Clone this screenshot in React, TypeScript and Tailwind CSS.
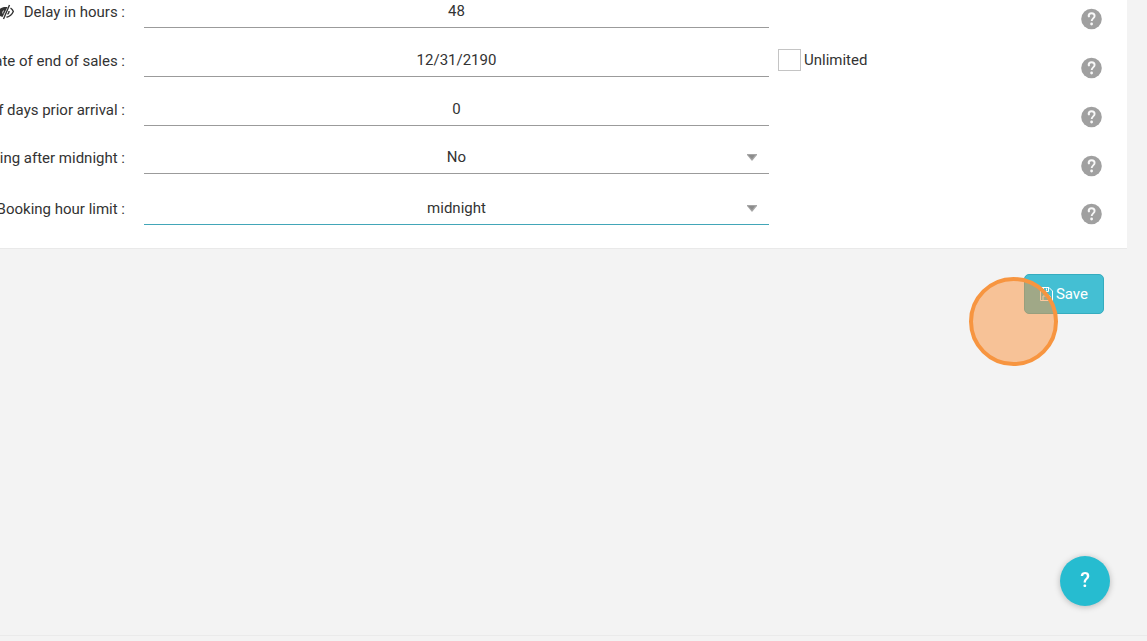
import { ReactNode } from 'react';

const fieldClass =
  'w-full h-8 appearance-none border-b border-[#9b9b9b] bg-transparent px-6 pb-0.5 text-center text-[#333] outline-none focus:border-[#42a6b8]';

function HelpButton({ label }: { label: string }) {
  return (
    <button type="button" aria-label={`Help: ${label}`} className="mt-[26px] ml-auto shrink-0 self-start">
      <svg width="21" height="22" viewBox="0 0 21 22" className="block">
        <circle cx="10.5" cy="11" r="10.3" fill="#a0a0a0" />
        <path d="M7.6 8.200C7.600 6.300 8.800 5.300 10.600 5.300c1.800 0 3 1 3 2.600 0 2.500-2.900 2.500-2.900 5.200" fill="none" stroke="#f8f8f8" strokeWidth="1.900" />
        <circle cx="7.900" cy="8.300" r="1.100" fill="#f8f8f8" />
        <circle cx="10.600" cy="16" r="1.400" fill="#f8f8f8" />
      </svg>
    </button>
  );
}

function HiddenIcon() {
  return (
    <svg width="18" height="16" viewBox="0 0 18 16" className="shrink-0">
      <path d="M1 8.500C3 4.500 6 3 9.500 3L11.500 3 6.500 13C4 12.500 2 11 1 8.500Z" fill="#333" />
      <path d="M8 6.500c-1.200.8-1.500 1.800-1.200 3" fill="none" stroke="#fff" strokeWidth="0.900" />
      <path d="M13.500 1 7.500 15M14.500 4c1.500 1 2.400 2.200 2.800 3.500-1.400 3.300-3.600 5-6.800 5.800M13 7c.2 1.500-.4 2.600-1.500 3.300" fill="none" stroke="#333" strokeWidth="1.400" />
    </svg>
  );
}

function SaveIcon() {
  return (
    <svg width="13" height="14" viewBox="0 0 13 14" fill="none" stroke="currentColor">
      <path d="M.5.5h8.500l3.500 3.500v9.500H.5zM3.500.5v4h5v-4M3 13.500v-4.500h7v4.500M6.500 1.500v2" />
    </svg>
  );
}

type RowProps = {
  id: string;
  label: string;
  icon?: ReactNode;
  extra?: ReactNode;
  height?: string;
  children: ReactNode;
};

function FormRow({ id, label, icon, extra, height = 'h-[49px]', children }: RowProps) {
  return (
    <div className={`grid grid-cols-[125px_minmax(0,635fr)_minmax(0,349fr)] gap-x-[9px] ${height}`}>
      <div className="flex h-full items-end justify-end overflow-hidden pb-[9px]">
        <div className="flex items-center gap-[10px] whitespace-nowrap">
          {icon}
          <label htmlFor={id}>{label} :</label>
        </div>
      </div>
      <div className="relative flex items-end pb-[3px] pl-[10px]">{children}</div>
      <div className="flex items-end pr-[25px]">
        {extra}
        <HelpButton label={label} />
      </div>
    </div>
  );
}

function SelectField({ id, options, active }: { id: string; options: string[]; active?: boolean }) {
  return (
    <>
      <select id={id} className={active ? `${fieldClass} border-[#42a6b8]!` : fieldClass}>
        {options.map((option) => (
          <option key={option}>{option}</option>
        ))}
      </select>
      <svg width="10" height="7" viewBox="0 0 10 7" className="pointer-events-none absolute right-3 bottom-4">
        <path d="M0 0h10v1L5 7 0 1z" fill="#a6a6a6" />
        <path d="M1 1h7L5 5z" fill="#8c8c8c" />
      </svg>
    </>
  );
}

export default function App() {
  return (
    <div className="flex min-h-screen flex-col overflow-hidden bg-[#f3f3f3] font-['Roboto',sans-serif] text-[15px] leading-5 text-[#333]">
      <form>
        {/* the panel is scrolled, its first row starts above the window */}
        <section className="-mt-[18px] mr-5 border-b border-[#e9e9e9] bg-white pb-5">
          <FormRow id="delay" label="Delay in hours" icon={<HiddenIcon />}>
            <input id="delay" type="text" defaultValue="48" className={fieldClass} />
          </FormRow>
          <FormRow
            id="end-date"
            label="Date of end of sales"
            extra={
              <label className="flex items-center gap-[3px] pb-[9px]">
                <input type="checkbox" className="h-[22px] w-[23px] appearance-none border border-[#c4c4c4] bg-white checked:bg-[#44bfd3]" />
                Unlimited
              </label>
            }
          >
            <input id="end-date" type="text" defaultValue="12/31/2190" className={fieldClass} />
          </FormRow>
          <FormRow id="days" label="Number of days prior arrival">
            <input id="days" type="text" defaultValue="0" className={fieldClass} />
          </FormRow>
          <FormRow id="after-midnight" label="Booking after midnight" height="h-12">
            <SelectField id="after-midnight" options={['No', 'Yes']} />
          </FormRow>
          <FormRow id="hour-limit" label="Booking hour limit" height="h-[51px]">
            <SelectField id="hour-limit" options={['midnight', 'noon']} active />
          </FormRow>
        </section>

        <div className="mt-[25px] flex justify-end pr-[43px]">
          <div className="relative">
            <button type="button" className="flex h-10 items-center gap-[3px] rounded-[5px] border border-[#35acbf] bg-[#44bfd3] px-[15px] text-white">
              <SaveIcon />
              Save
            </button>
            <span className="pointer-events-none absolute top-[3px] -left-[55px] size-[89px] rounded-full border-4 border-[#f79540] bg-[#fb923c]/50" />
          </div>
        </div>
      </form>

      <button
        type="button"
        aria-label="Help"
        className="fixed right-[37px] bottom-[35px] flex size-[50px] items-center justify-center rounded-full bg-[#26bcd0] pb-0.5 text-xl font-medium text-white shadow-[0_1px_6px_rgba(0,0,0,0.25)]"
      >
        ?
      </button>

      <footer className="mt-auto h-[6px] border-t border-[#eaeaea]" />
    </div>
  );
}
